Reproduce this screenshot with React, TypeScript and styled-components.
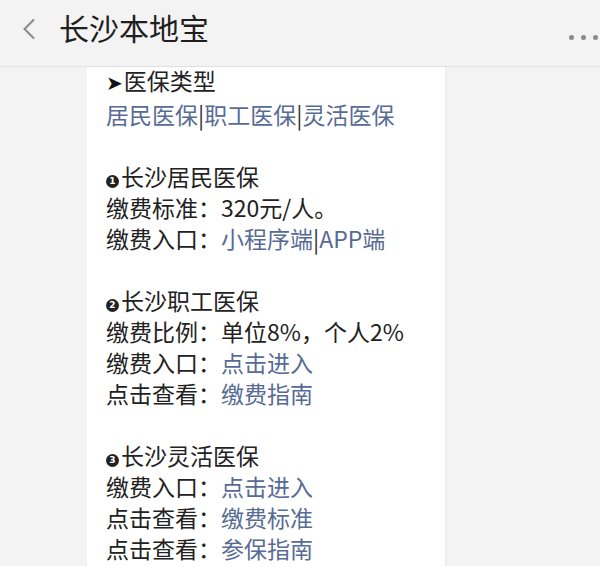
import React from 'react';
import styled, { createGlobalStyle } from 'styled-components';

const GlobalStyle = createGlobalStyle`
    html, body {
        margin: 0;
        padding: 0;
        height: 100%;
        background-color: #f3f3f3;
        overflow: hidden;
    }
    body {
        font-family: "Noto Sans CJK SC", "Noto Sans", sans-serif;
    }
`

const Header = styled.div`
    display: flex;
    align-items: flex-start;
    height: 66px;
    padding: 0 2px 0 22px;
    background-color: #f3f3f3;
    border-bottom: 1px solid #e2e2e2;
    box-sizing: content-box;
`

const BackIcon = styled.svg`
    width: 14px;
    height: 22px;
    margin-top: 18px;
    margin-right: 23px;
    flex-shrink: 0;
`

const Title = styled.span`
    font-size: 30px;
    line-height: 54px;
    color: #1f1f1f;
`

const Dots = styled.div`
    display: flex;
    gap: 7px;
    margin-left: auto;
    margin-top: 35px;
`

const Dot = styled.span`
    width: 5px;
    height: 5px;
    border-radius: 50%;
    background-color: #8a8a8a;
`

const Main = styled.div`
    display: flex;
    padding-left: 87px;
`

const Card = styled.div`
    width: 358px;
    min-height: calc(100vh - 67px);
    padding: 1px 0 0 19px;
    box-sizing: border-box;
    background-color: #fff;
    box-shadow: 1px 0 2px rgba(0,0,0,0.04);
    font-size: 23px;
    line-height: 31px;
    color: #222;
`

const Section = styled.div`
    margin-bottom: 31px;

    &:first-child {
        margin-top: -3px;
    }
`

const Line = styled.div`
    white-space: nowrap;
`

const Link = styled.a`
    color: #576b95;
    text-decoration: none;
`

const Sep = styled.span`
    color: #333;
`

const Arrow = styled.span`
    font-family: "DejaVu Sans", sans-serif;
    font-size: 20px;
    color: #111;
    margin-right: 1px;
`

const NumBadge = styled.span`
    display: inline-flex;
    align-items: center;
    justify-content: center;
    width: 13px;
    height: 13px;
    border-radius: 50%;
    background-color: #222;
    color: #fff;
    font-family: "DejaVu Sans", sans-serif;
    font-size: 9px;
    font-weight: bold;
    line-height: 1;
    vertical-align: 2px;
    margin-right: 2px;
`

const Label = ({ text }: { text: string }) => <span>{text}：</span>

const App = () => {
    return <>
        <GlobalStyle />
        <Header>
            <BackIcon viewBox="0 0 14 22">
                <polyline points="12,1.5 2.5,11 12,20.5" fill="none" stroke="#8a8a8a" strokeWidth="2" />
            </BackIcon>
            <Title>长沙本地宝</Title>
            <Dots>
                <Dot />
                <Dot />
                <Dot />
            </Dots>
        </Header>
        <Main>
            <Card>
                <Section>
                    <Line><Arrow>➤</Arrow>医保类型</Line>
                    <Line>
                        <Link href="#">居民医保</Link><Sep>|</Sep><Link href="#">职工医保</Link><Sep>|</Sep><Link href="#">灵活医保</Link>
                    </Line>
                </Section>
                <Section>
                    <Line><NumBadge>1</NumBadge>长沙居民医保</Line>
                    <Line><Label text="缴费标准" />320元/人。</Line>
                    <Line><Label text="缴费入口" /><Link href="#">小程序端</Link><Sep>|</Sep><Link href="#">APP端</Link></Line>
                </Section>
                <Section>
                    <Line><NumBadge>2</NumBadge>长沙职工医保</Line>
                    <Line><Label text="缴费比例" />单位8%，个人2%</Line>
                    <Line><Label text="缴费入口" /><Link href="#">点击进入</Link></Line>
                    <Line><Label text="点击查看" /><Link href="#">缴费指南</Link></Line>
                </Section>
                <Section>
                    <Line><NumBadge>3</NumBadge>长沙灵活医保</Line>
                    <Line><Label text="缴费入口" /><Link href="#">点击进入</Link></Line>
                    <Line><Label text="点击查看" /><Link href="#">缴费标准</Link></Line>
                    <Line><Label text="点击查看" /><Link href="#">参保指南</Link></Line>
                </Section>
            </Card>
        </Main>
    </>;
}

export default App
